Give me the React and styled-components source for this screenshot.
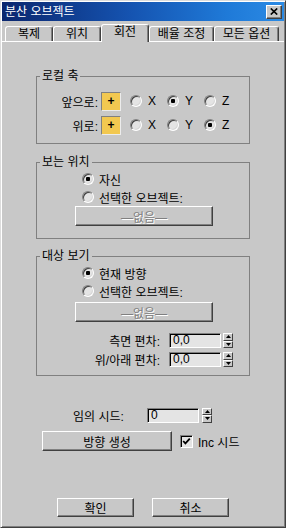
import React from "react";
import styled, { createGlobalStyle } from "styled-components";

const FONT = `"Liberation Sans", "Noto Sans CJK KR", sans-serif`;

const GlobalStyle = createGlobalStyle`
  html, body {
    margin: 0;
    padding: 0;
    background: #c8c8c8;
  }
  body {
    font-family: ${FONT};
    font-size: 12px;
    color: #000;
  }
`;

const TABS = ["복제", "위치", "회전", "배율 조정", "모든 옵션"];
const TAB_WIDTHS = [48, 48, 48, 65, 65];

const AXES = [
  { label: "앞으로:", checked: "Y" },
  { label: "위로:", checked: "Z" },
];

export default function App() {
  return (
    <>
      <GlobalStyle />
      <Window>
        <TitleBar>
          <Title>분산 오브젝트</Title>
          <CloseButton>
            <svg width="8" height="7" viewBox="0 0 8 7">
              <path d="M0.8 0.5 L7.2 6.5 M7.2 0.5 L0.8 6.5" stroke="#000" strokeWidth="1.7" />
            </svg>
          </CloseButton>
        </TitleBar>

        <TabStrip>
          {TABS.map((t, i) => (
            <Tab key={t} $w={TAB_WIDTHS[i]} $active={i === 2}>
              {t}
            </Tab>
          ))}
        </TabStrip>

        <Panel>
          <Group $top={27} $pt={8} $pb={8}>
            <Legend>로컬 축</Legend>
            {AXES.map((a, i) => (
              <AxisRow key={a.label} $first={i === 0}>
                <AxisLabel>{a.label}</AxisLabel>
                <FlipBox>+</FlipBox>
                <AxisOptions>
                  {["X", "Y", "Z"].map((ax) => (
                    <AxisOption key={ax}>
                      <Radio $checked={a.checked === ax} />
                      <span>{ax}</span>
                    </AxisOption>
                  ))}
                </AxisOptions>
              </AxisRow>
            ))}
          </Group>

          <Group $top={11} $pt={1} $pb={12}>
            <Legend>보는 위치</Legend>
            <RadioRow>
              <Radio $checked />
              <span>자신</span>
            </RadioRow>
            <RadioRow>
              <Radio />
              <span>선택한 오브젝트:</span>
            </RadioRow>
            <PickButton>—없음—</PickButton>
          </Group>

          <Group $top={10} $pt={1} $pb={7}>
            <Legend>대상 보기</Legend>
            <RadioRow>
              <Radio $checked />
              <span>현재 방향</span>
            </RadioRow>
            <RadioRow>
              <Radio />
              <span>선택한 오브젝트:</span>
            </RadioRow>
            <PickButton $top={2}>—없음—</PickButton>
            <OffsetRow $top={10}>
              <OffsetLabel>측면 편차:</OffsetLabel>
              <NumField>0,0</NumField>
              <Spinner />
            </OffsetRow>
            <OffsetRow $top={2}>
              <OffsetLabel>위/아래 편차:</OffsetLabel>
              <NumField>0,0</NumField>
              <Spinner />
            </OffsetRow>
          </Group>

          <SeedRow>
            <SeedLabel>임의 시드:</SeedLabel>
            <NumField>0</NumField>
            <Spinner $gap={3} />
          </SeedRow>

          <ActionRow>
            <Button $w={130} $h={20}>방향 생성</Button>
            <CheckBox>
              <svg width="9" height="9" viewBox="0 0 9 9">
                <path d="M1.2 4 L3.4 6.4 L7.8 1.6" stroke="#000" strokeWidth="1.8" fill="none" />
              </svg>
            </CheckBox>
            <CheckLabel>Inc 시드</CheckLabel>
          </ActionRow>

          <Footer>
            <Button $w={77} $h={19}>확인</Button>
            <Button $w={77} $h={19}>취소</Button>
          </Footer>
        </Panel>
      </Window>
    </>
  );
}

function Spinner({ $gap = 2 }) {
  return (
    <SpinWrap $gap={$gap}>
      <SpinHalf>
        <svg width="5" height="3" viewBox="0 0 5 3">
          <path d="M2.5 0 L5 3 L0 3 Z" fill="#000" />
        </svg>
      </SpinHalf>
      <SpinHalf>
        <svg width="5" height="3" viewBox="0 0 5 3">
          <path d="M0 0 L5 0 L2.5 3 Z" fill="#000" />
        </svg>
      </SpinHalf>
    </SpinWrap>
  );
}

const Window = styled.div`
  width: 286px;
  height: 528px;
  box-sizing: border-box;
  border: 1px solid;
  border-color: #dcdcdc #404040 #404040 #dcdcdc;
  box-shadow: inset 1px 1px #fff, inset -1px -1px #808080;
  padding: 1px;
  background: #c8c8c8;
  display: flex;
  flex-direction: column;
  overflow: hidden;
`;

const TitleBar = styled.div`
  height: 19px;
  flex-shrink: 0;
  display: flex;
  align-items: center;
  padding: 0 2px 0 3px;
  background: linear-gradient(90deg, #0a266e 0%, #1553b0 45%, #1f7ad8 80%, #2b8ae4 100%);
`;

const Title = styled.div`
  flex: 1;
  color: #fff;
  font-size: 12px;
  line-height: 14px;
`;

const CloseButton = styled.div`
  width: 16px;
  height: 14px;
  box-sizing: border-box;
  border: 1px solid;
  border-color: #fff #404040 #404040 #fff;
  box-shadow: inset -1px -1px #808080;
  background: #c8c8c8;
  display: flex;
  align-items: center;
  justify-content: center;
`;

const TabStrip = styled.div`
  height: 20px;
  flex-shrink: 0;
  display: flex;
  align-items: flex-end;
  padding-left: 3px;
`;

const Tab = styled.div`
  width: ${(p) => p.$w}px;
  height: ${(p) => (p.$active ? 18 : 15)}px;
  margin-bottom: ${(p) => (p.$active ? -1 : 0)}px;
  position: relative;
  z-index: ${(p) => (p.$active ? 1 : 0)};
  box-sizing: border-box;
  border: 1px solid;
  border-bottom: none;
  border-color: #fff #404040 transparent #fff;
  border-radius: 3px 3px 0 0;
  box-shadow: inset -1px 0 #808080;
  background: #c8c8c8;
  text-align: center;
  font-size: 12px;
  line-height: ${(p) => (p.$active ? 15 : 14)}px;
`;

const Panel = styled.div`
  flex: 1;
  border-top: 1px solid #fff;
  display: flex;
  flex-direction: column;
`;

const Group = styled.fieldset`
  margin: ${(p) => p.$top}px 0 0 34px;
  width: 214px;
  min-width: 0;
  box-sizing: border-box;
  border: 1px solid #808080;
  padding: ${(p) => p.$pt}px 0 ${(p) => p.$pb}px 0;
`;

const Legend = styled.legend`
  margin-left: 3px;
  padding: 0 2px;
  font-size: 12px;
  line-height: 14px;
`;

const AxisRow = styled.div`
  display: flex;
  align-items: center;
  height: 20px;
  margin-top: ${(p) => (p.$first ? 0 : 4)}px;
`;

const AxisLabel = styled.div`
  width: 61px;
  text-align: right;
`;

const FlipBox = styled.div`
  margin-left: 3px;
  width: 20px;
  height: 19px;
  box-sizing: border-box;
  border: 1px solid;
  border-color: #808080 #ececec #ececec #808080;
  background: #f2c850;
  display: flex;
  align-items: center;
  justify-content: center;
  font-size: 12px;
  font-weight: bold;
`;

const AxisOptions = styled.div`
  display: flex;
  margin-left: 9px;
`;

const AxisOption = styled.div`
  width: 37px;
  display: flex;
  align-items: center;
  gap: 6px;
`;

const Radio = styled.span`
  width: 12px;
  height: 12px;
  flex-shrink: 0;
  box-sizing: border-box;
  border-radius: 50%;
  border: 1px solid;
  border-color: #808080 #fff #fff #808080;
  box-shadow: inset 1px 1px #404040, inset -1px -1px #d8d8d8;
  background: ${(p) =>
    p.$checked
      ? "radial-gradient(circle, #000 0 2px, #e4e4e4 2.5px)"
      : "#e4e4e4"};
`;

const RadioRow = styled.div`
  display: flex;
  align-items: center;
  gap: 5px;
  height: 18px;
  padding-left: 45px;
`;

const PickButton = styled.div`
  margin: ${(p) => p.$top || 0}px 0 0 38px;
  width: 138px;
  height: 20px;
  box-sizing: border-box;
  border: 1px solid;
  border-color: #fff #404040 #404040 #fff;
  box-shadow: inset -1px -1px #808080;
  display: flex;
  align-items: center;
  justify-content: center;
  color: #808080;
  text-shadow: 1px 1px #fff;
`;

const OffsetRow = styled.div`
  display: flex;
  align-items: center;
  height: 17px;
  margin-top: ${(p) => p.$top}px;
`;

const OffsetLabel = styled.div`
  width: 123px;
  text-align: right;
  margin-right: 9px;
`;

const NumField = styled.div`
  width: 52px;
  height: 15px;
  box-sizing: border-box;
  border: 1px solid;
  border-color: #808080 #fff #fff #808080;
  box-shadow: inset 1px 1px #000;
  background: #e4e4e4;
  padding-left: 3px;
  font-size: 12px;
  line-height: 13px;
`;

const SpinWrap = styled.div`
  margin-left: ${(p) => p.$gap}px;
  width: 10px;
  height: 15px;
  display: flex;
  flex-direction: column;
`;

const SpinHalf = styled.div`
  flex: 1;
  box-sizing: border-box;
  border: 1px solid;
  border-color: #fff #404040 #404040 #fff;
  background: #c8c8c8;
  display: flex;
  align-items: center;
  justify-content: center;
`;

const SeedRow = styled.div`
  display: flex;
  align-items: center;
  height: 16px;
  margin-top: 31px;
  padding-left: 71px;
`;

const SeedLabel = styled.div`
  width: 74px;
`;

const ActionRow = styled.div`
  display: flex;
  align-items: center;
  margin-top: 8px;
  padding-left: 40px;
`;

const Button = styled.div`
  width: ${(p) => p.$w}px;
  height: ${(p) => p.$h}px;
  box-sizing: border-box;
  border: 1px solid;
  border-color: #fff #404040 #404040 #fff;
  box-shadow: inset -1px -1px #808080;
  background: #c8c8c8;
  display: flex;
  align-items: center;
  justify-content: center;
  font-size: 12px;
`;

const CheckBox = styled.div`
  margin-left: 8px;
  width: 13px;
  height: 13px;
  box-sizing: border-box;
  border: 1px solid;
  border-color: #808080 #fff #fff #808080;
  box-shadow: inset 1px 1px #000;
  background: #e4e4e4;
  display: flex;
  align-items: center;
  justify-content: center;
`;

const CheckLabel = styled.span`
  margin-left: 5px;
`;

const Footer = styled.div`
  display: flex;
  justify-content: center;
  gap: 18px;
  margin-top: 47px;
`;
